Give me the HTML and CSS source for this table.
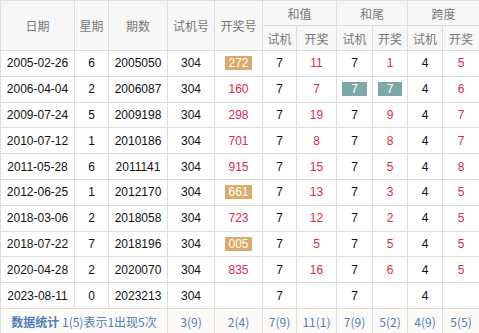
FILE: index.html
```html
<!DOCTYPE html>
<html lang="zh">
<head>
  <meta charset="UTF-8">
  <meta name="viewport" content="width=device-width, initial-scale=1.0">
  <title>试机号 304 历史开奖</title>
  <link rel="stylesheet" href="styles.css">
</head>
<body>

<table class="kj-table">
  <colgroup>
    <col style="width:74px"><col style="width:34px"><col style="width:59px"><col style="width:47px">
    <col style="width:48px"><col style="width:34px"><col style="width:40px"><col style="width:36px">
    <col style="width:35px"><col style="width:35px"><col style="width:37px">
  </colgroup>
  <thead>
    <tr>
      <th rowspan="2">日期</th>
      <th rowspan="2">星期</th>
      <th rowspan="2">期数</th>
      <th rowspan="2">试机号</th>
      <th rowspan="2">开奖号</th>
      <th colspan="2">和值</th>
      <th colspan="2">和尾</th>
      <th colspan="2">跨度</th>
    </tr>
    <tr>
      <th>试机</th><th>开奖</th>
      <th>试机</th><th>开奖</th>
      <th>试机</th><th>开奖</th>
    </tr>
  </thead>
  <tbody>
    <tr>
      <td>2005-02-26</td><td>6</td><td>2005050</td><td>304</td>
      <td><span class="tag tag-gold">272</span></td>
      <td>7</td><td class="red">11</td><td>7</td><td class="red">1</td><td>4</td><td class="red">5</td>
    </tr>
    <tr>
      <td>2006-04-04</td><td>2</td><td>2006087</td><td>304</td>
      <td class="red">160</td>
      <td>7</td><td class="red">7</td>
      <td><span class="tag tag-teal">7</span></td><td><span class="tag tag-teal">7</span></td>
      <td>4</td><td class="red">6</td>
    </tr>
    <tr>
      <td>2009-07-24</td><td>5</td><td>2009198</td><td>304</td>
      <td class="red">298</td>
      <td>7</td><td class="red">19</td><td>7</td><td class="red">9</td><td>4</td><td class="red">7</td>
    </tr>
    <tr>
      <td>2010-07-12</td><td>1</td><td>2010186</td><td>304</td>
      <td class="red">701</td>
      <td>7</td><td class="red">8</td><td>7</td><td class="red">8</td><td>4</td><td class="red">7</td>
    </tr>
    <tr>
      <td>2011-05-28</td><td>6</td><td>2011141</td><td>304</td>
      <td class="red">915</td>
      <td>7</td><td class="red">15</td><td>7</td><td class="red">5</td><td>4</td><td class="red">8</td>
    </tr>
    <tr>
      <td>2012-06-25</td><td>1</td><td>2012170</td><td>304</td>
      <td><span class="tag tag-gold">661</span></td>
      <td>7</td><td class="red">13</td><td>7</td><td class="red">3</td><td>4</td><td class="red">5</td>
    </tr>
    <tr>
      <td>2018-03-06</td><td>2</td><td>2018058</td><td>304</td>
      <td class="red">723</td>
      <td>7</td><td class="red">12</td><td>7</td><td class="red">2</td><td>4</td><td class="red">5</td>
    </tr>
    <tr>
      <td>2018-07-22</td><td>7</td><td>2018196</td><td>304</td>
      <td><span class="tag tag-gold">005</span></td>
      <td>7</td><td class="red">5</td><td>7</td><td class="red">5</td><td>4</td><td class="red">5</td>
    </tr>
    <tr>
      <td>2020-04-28</td><td>2</td><td>2020070</td><td>304</td>
      <td class="red">835</td>
      <td>7</td><td class="red">16</td><td>7</td><td class="red">6</td><td>4</td><td class="red">5</td>
    </tr>
    <tr>
      <td>2023-08-11</td><td>0</td><td>2023213</td><td>304</td>
      <td></td>
      <td>7</td><td></td><td>7</td><td></td><td>4</td><td></td>
    </tr>
  </tbody>
  <tfoot>
    <tr>
      <td colspan="3"><b>数据统计</b> 1(5)表示1出现5次</td>
      <td>3(9)</td><td>2(4)</td>
      <td>7(9)</td><td>11(1)</td><td>7(9)</td><td>5(2)</td><td>4(9)</td><td>5(5)</td>
    </tr>
  </tfoot>
</table>

</body>
</html>
```

FILE: styles.css
```css
body {
  margin: 0;
  background: #fff;
  font-family: "Liberation Sans", Arial, "Noto Sans CJK SC", sans-serif;
}
.kj-table {
  width: 479px;
  border-collapse: collapse;
  table-layout: fixed;
  font-size: 12px;
  text-align: center;
}
.kj-table th,
.kj-table td {
  border: 1px solid #ddd;
  padding: 0;
  white-space: nowrap;
}
.kj-table th {
  height: 24px;
  background: #f7f7f7;
  color: #777;
  font-weight: normal;
  font-family: "Noto Sans CJK SC", sans-serif;
}
.kj-table td {
  height: 24.8px;
  color: #111;
}
.kj-table .red {
  color: #dc2a4a;
}
.tag {
  display: inline-block;
  padding: 0 3px;
  line-height: 14px;
  color: #fff;
}
.tag-gold {
  background: #dcaa6b;
}
.tag-teal {
  background: #7ea8a8;
  padding: 0 9px;
}
.kj-table tfoot td {
  background: #fcfaf6;
  color: #4f7db8;
  font-family: "Noto Sans CJK SC", sans-serif;
}
.kj-table tfoot b {
  font-weight: bold;
}
```
